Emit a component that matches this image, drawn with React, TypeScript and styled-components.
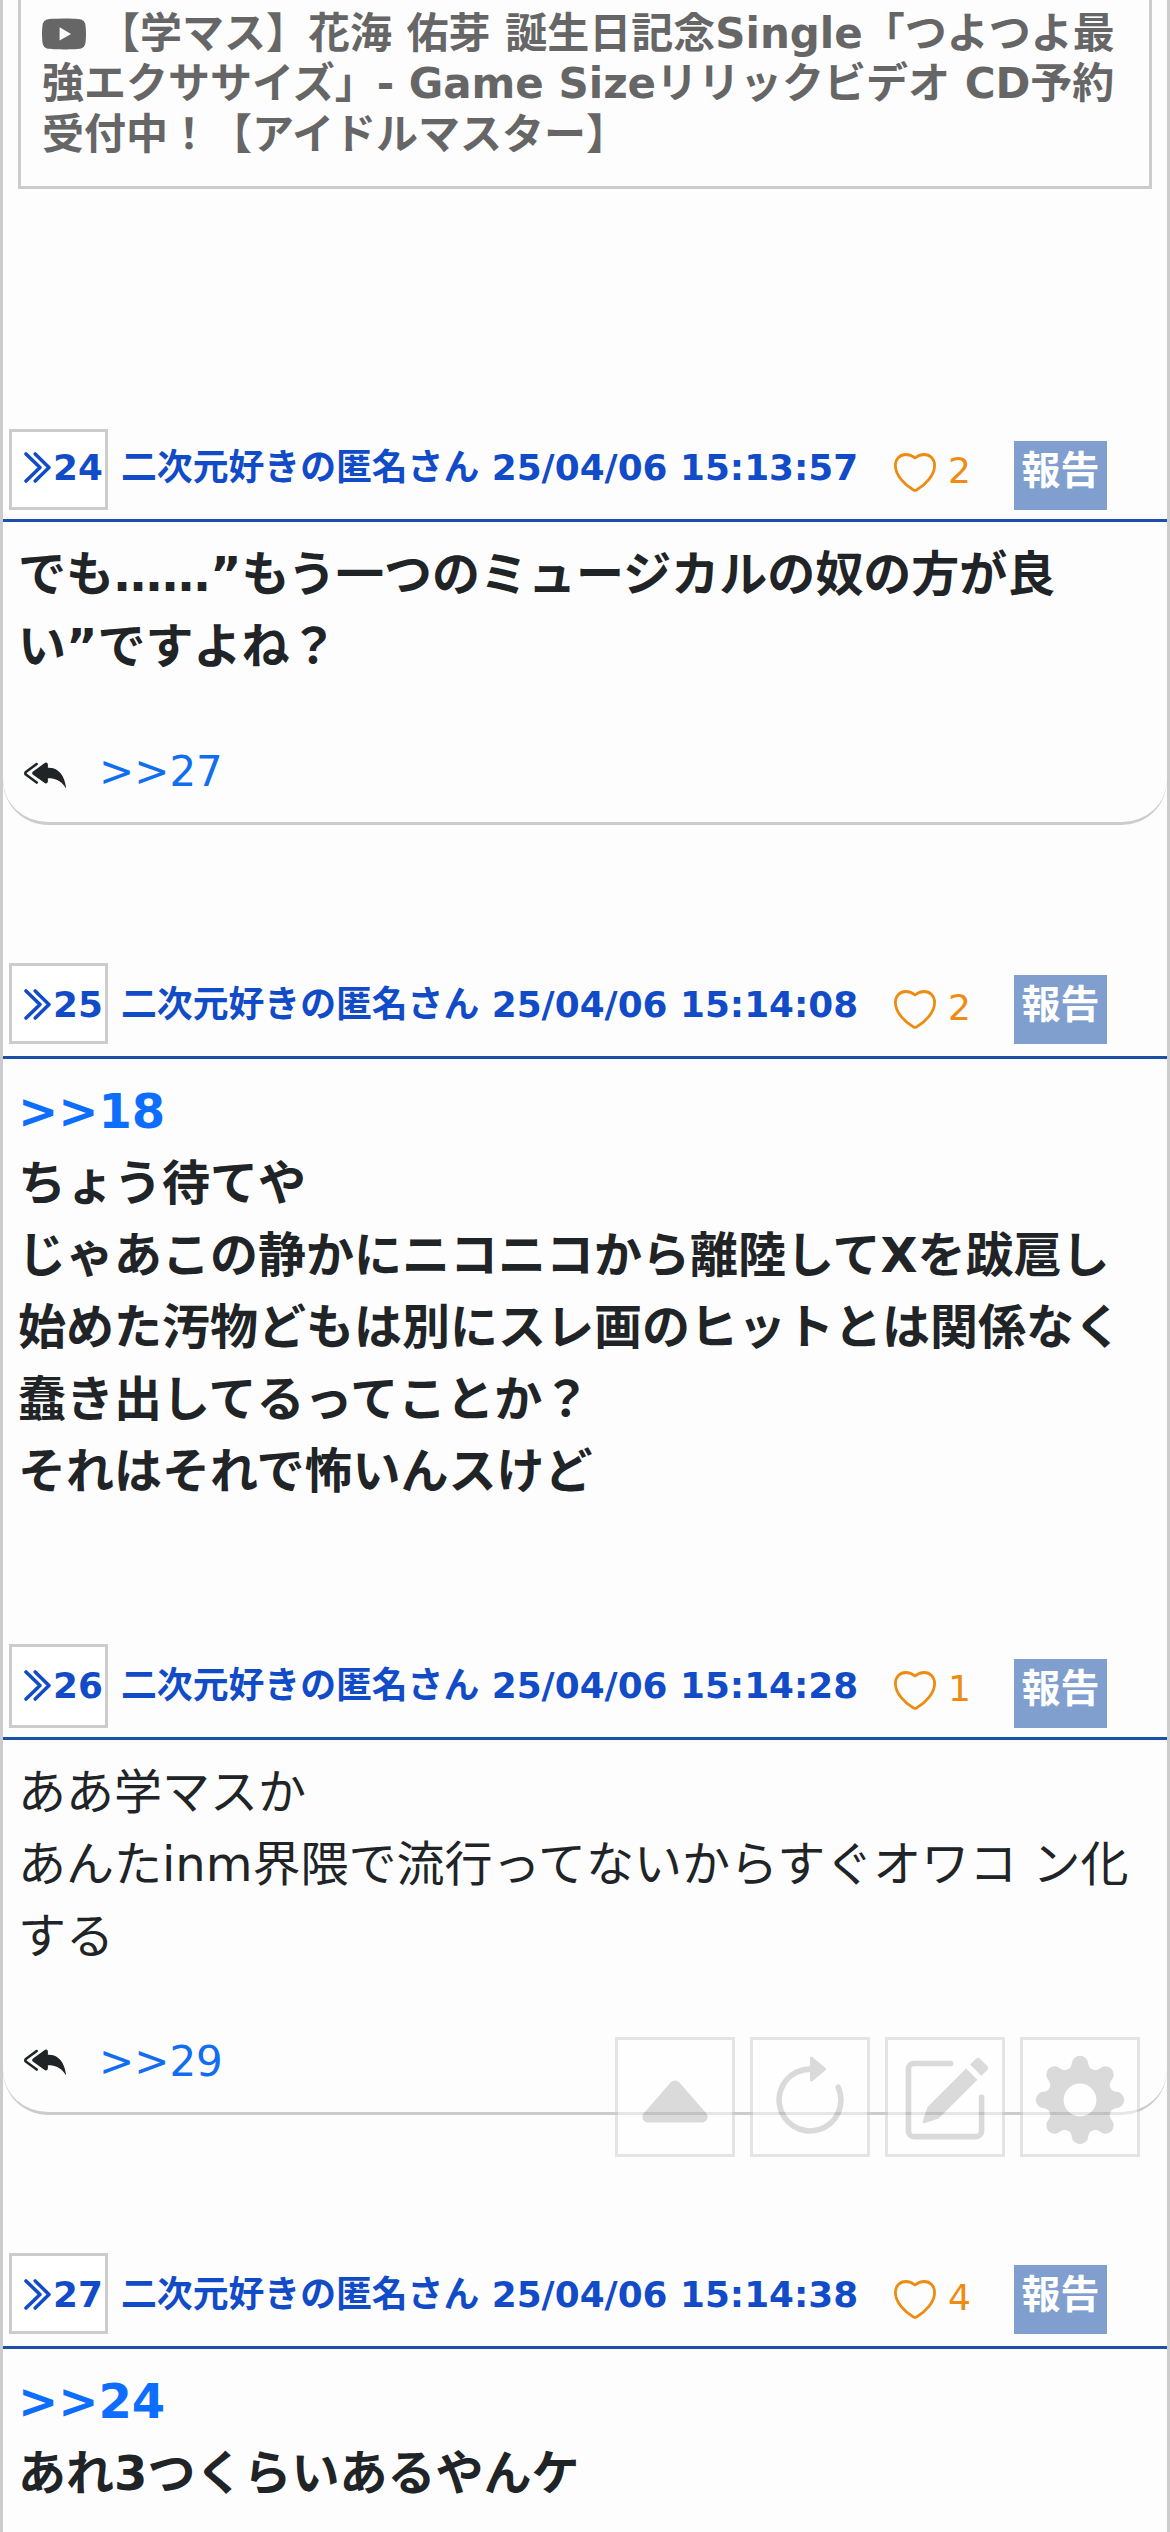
import React from 'react';
import styled, { createGlobalStyle } from 'styled-components';
import { BsYoutube, BsReplyAllFill, BsCaretUpFill, BsArrowClockwise, BsPencilSquare } from 'react-icons/bs';

const GlobalStyle = createGlobalStyle`
  * { box-sizing: border-box; }
  html, body { margin: 0; padding: 0; }
  body {
    background: #fdfdfd;
    color: #212427;
    font-family: "DejaVu Sans", "Noto Sans CJK JP", sans-serif;
    font-size: 48px;
    line-height: 72px;
    overflow: hidden;
  }
`;

const Page = styled.main`
  width: 1170px;
  height: 2532px;
  overflow: hidden;
  border: solid #ccc;
  border-width: 0 3px;
  background: #fdfdfd;
`;

const VideoCard = styled.a`
  display: block;
  height: 189px;
  margin: 0 15px;
  padding: 9px 21px 0;
  border: 3px solid #ccc;
  border-top: 0;
  color: #666;
  font-size: 42px;
  font-weight: 700;
  line-height: 50.4px;
`;

const VideoIcon = styled(BsYoutube)`
  display: inline-block;
  width: 44px;
  height: 44px;
  margin-right: 12px;
  vertical-align: -9px;
`;

const Post = styled.article<{ $gap: number; $height?: number; $closed?: boolean }>`
  display: flex;
  flex-direction: column;
  margin-top: ${(p) => p.$gap}px;
  height: ${(p) => (p.$height ? `${p.$height}px` : 'auto')};
  border-bottom: ${(p) => (p.$closed ? '3px solid #ccc' : '0')};
  border-radius: ${(p) => (p.$closed ? '0 0 45px 45px' : '0')};
`;

const PostHeader = styled.header<{ $height: number; $inset: number }>`
  display: flex;
  align-items: flex-end;
  flex: none;
  height: ${(p) => p.$height}px;
  padding: 0 60px ${(p) => p.$inset}px 6px;
  border-bottom: 3px solid #1c4fa8;
  color: #114bc8;
  font-size: 36px;
  line-height: 54px;
`;

const NumberBox = styled.a<{ $height: number; $drop: number }>`
  display: flex;
  align-items: flex-end;
  flex: none;
  width: 99px;
  height: ${(p) => p.$height}px;
  padding: 0 0 ${(p) => p.$drop}px 12px;
  border: 3px solid #ccc;
  background: #fff;
  font-size: 35.8px;
  font-weight: 700;
`;

const ChevronSvg = styled.svg`
  flex: none;
  width: 28px;
  height: 31px;
  margin: 0 1px 12px 0;
`;

const Author = styled.span<{ $drop: number }>`
  flex: none;
  width: 786px;
  padding: 0 0 ${(p) => p.$drop}px 13px;
  font-size: 35.84px;
  font-weight: 700;
  white-space: nowrap;
`;

const Likes = styled.span<{ $drop: number }>`
  display: flex;
  flex: none;
  align-items: flex-end;
  gap: 12px;
  padding-bottom: ${(p) => p.$drop}px;
  color: #ed8c13;
`;

const HeartSvg = styled.svg`
  width: 42px;
  height: 39px;
  margin-bottom: 6px;
`;

const Report = styled.button`
  flex: none;
  width: 93px;
  height: 69px;
  margin-left: auto;
  padding: 0 0 9px;
  border: 0;
  background: #809fcf;
  color: #fff;
  font: 700 39px/58px "DejaVu Sans", "Noto Sans CJK JP", sans-serif;
  white-space: nowrap;
`;

const Body = styled.p<{ $bold?: boolean }>`
  margin: 0;
  padding: 16px 30px 0 15px;
  font-weight: ${(p) => (p.$bold ? 700 : 400)};
  white-space: pre-line;
`;

const Quote = styled.a`
  color: #0d6efd;
`;

const Replies = styled.div`
  display: flex;
  align-items: center;
  gap: 33px;
  margin-top: auto;
  padding: 0 21px 19px;
  font-size: 42px;
  line-height: 63px;
  color: #116ef0;
`;

const ReplyIcon = styled(BsReplyAllFill)<{ $raise: number }>`
  width: 42px;
  height: 42px;
  margin-bottom: ${(p) => p.$raise}px;
  color: #212427;
`;

const Toolbar = styled.nav`
  position: fixed;
  left: 615px;
  top: 2037px;
  display: flex;
  gap: 15px;
  opacity: 0.5;
`;

const Tool = styled.button`
  display: flex;
  align-items: center;
  justify-content: center;
  width: 120px;
  height: 120px;
  padding: 6px 0 0;
  border: 3px solid #ccc;
  background: #fff;
  color: #b8b8b8;

  svg {
    flex: none;
    width: 90px;
    height: 90px;
  }
`;

const Chevrons = () => (
  <ChevronSvg viewBox="0 0 28 31" fill="none" stroke="currentColor" strokeWidth="3.5" strokeLinecap="round" strokeLinejoin="round">
    <path d="M2 1.9 16 15.5 2 29.1M11.2 1.9 25 15.5 11.2 29.1" />
  </ChevronSvg>
);

const Heart = () => (
  <HeartSvg viewBox="0 0 42 39" fill="none" stroke="currentColor" strokeWidth="2.8" strokeLinejoin="round">
    <path d="M21 5C18 2.5 15 1.5 11.8 1.5C6 1.5 1.4 6 1.4 12.5C1.4 22 10.5 32 19.5 37Q21 37.8 22.5 37C31.5 32 40.6 22 40.6 12.5C40.6 6 36 1.5 30.2 1.5C27 1.5 24 2.5 21 5Z" />
  </HeartSvg>
);

const LOBE_ORBIT = 36.6;
const LOBE_RADIUS = 8.3;
const VALLEY_ORBIT = 39.8;
const VALLEY_RADIUS = 7;

const gearOutline = () => {
  const at = (orbit: number, deg: number) => {
    const a = (deg * Math.PI) / 180;
    return [45 + orbit * Math.cos(a), 45 + orbit * Math.sin(a)];
  };
  const joint = (lobeDeg: number, valleyDeg: number) => {
    const [lx, ly] = at(LOBE_ORBIT, lobeDeg);
    const [vx, vy] = at(VALLEY_ORBIT, valleyDeg);
    const t = LOBE_RADIUS / (LOBE_RADIUS + VALLEY_RADIUS);
    return `${(lx + (vx - lx) * t).toFixed(2)} ${(ly + (vy - ly) * t).toFixed(2)}`;
  };
  let d = `M${joint(0, -22.5)}`;
  for (let i = 0; i < 8; i++) {
    const deg = i * 45;
    d += `A${LOBE_RADIUS} ${LOBE_RADIUS} 0 0 1 ${joint(deg, deg + 22.5)}`;
    d += `A${VALLEY_RADIUS} ${VALLEY_RADIUS} 0 0 0 ${joint(deg + 45, deg + 22.5)}`;
  }
  return `${d}Z`;
};

const Gear = () => (
  <svg viewBox="0 0 90 90" fill="currentColor">
    <path fillRule="evenodd" d={`${gearOutline()}M28.6 45a16.4 16.4 0 1 0 32.8 0a16.4 16.4 0 1 0-32.8 0Z`} />
  </svg>
);

interface PostData {
  id: number;
  time: string;
  likes: number;
  gap: number;
  height?: number;
  raise?: number;
  box: number;
  inset: number;
  quote?: string;
  text: string;
  bold?: boolean;
  reply?: string;
}

const posts: PostData[] = [
  { id: 24, time: '15:13:57', likes: 2, gap: 240, height: 396, raise: -2, box: 81, inset: 9, bold: true, text: 'でも……”もう一つのミュージカルの奴の方が良い”ですよね？', reply: '>>27' },
  { id: 25, time: '15:14:08', likes: 2, gap: 138, height: 681, box: 81, inset: 12, bold: true, quote: '>>18', text: 'ちょう待てや\nじゃあこの静かにニコニコから離陸してXを跋扈し始めた汚物どもは別にスレ画のヒットとは関係なく蠢き出してるってことか？\nそれはそれで怖いんスけど' },
  { id: 26, time: '15:14:28', likes: 1, gap: 0, height: 471, raise: 4, box: 84, inset: 9, text: 'ああ学マスか\nあんたinm界隈で流行ってないからすぐオワコ ン化する', reply: '>>29' },
  { id: 27, time: '15:14:38', likes: 4, gap: 138, box: 81, inset: 12, bold: true, quote: '>>24', text: 'あれ3つくらいあるやんケ' },
];

const PostView = ({ post }: { post: PostData }) => (
  <Post $gap={post.gap} $height={post.height} $closed={!!post.reply}>
    <PostHeader $height={post.box + post.inset + 3} $inset={post.inset}>
      <NumberBox $height={post.box} $drop={21 - post.inset}>
        <Chevrons />{post.id}
      </NumberBox>
      <Author $drop={24 - post.inset}>二次元好きの匿名さん 25/04/06 {post.time}</Author>
      <Likes $drop={21 - post.inset}><Heart />{post.likes}</Likes>
      <Report>報告</Report>
    </PostHeader>
    <Body $bold={post.bold}>
      {post.quote && <><Quote>{post.quote}</Quote><br /></>}
      {post.text}
    </Body>
    {post.reply && <Replies><ReplyIcon $raise={post.raise ?? 0} />{post.reply}</Replies>}
  </Post>
);

export default function App() {
  return (
    <>
      <GlobalStyle />
      <Page>
        <VideoCard>
          <VideoIcon />
          【学マス】花海 佑芽 誕生日記念Single「つよつよ最強エクササイズ」- Game Sizeリリックビデオ CD予約受付中！【アイドルマスター】
        </VideoCard>
        {posts.map((p) => <PostView key={p.id} post={p} />)}
      </Page>
      <Toolbar>
        <Tool><BsCaretUpFill /></Tool>
        <Tool><BsArrowClockwise /></Tool>
        <Tool><BsPencilSquare /></Tool>
        <Tool><Gear /></Tool>
      </Toolbar>
    </>
  );
}
